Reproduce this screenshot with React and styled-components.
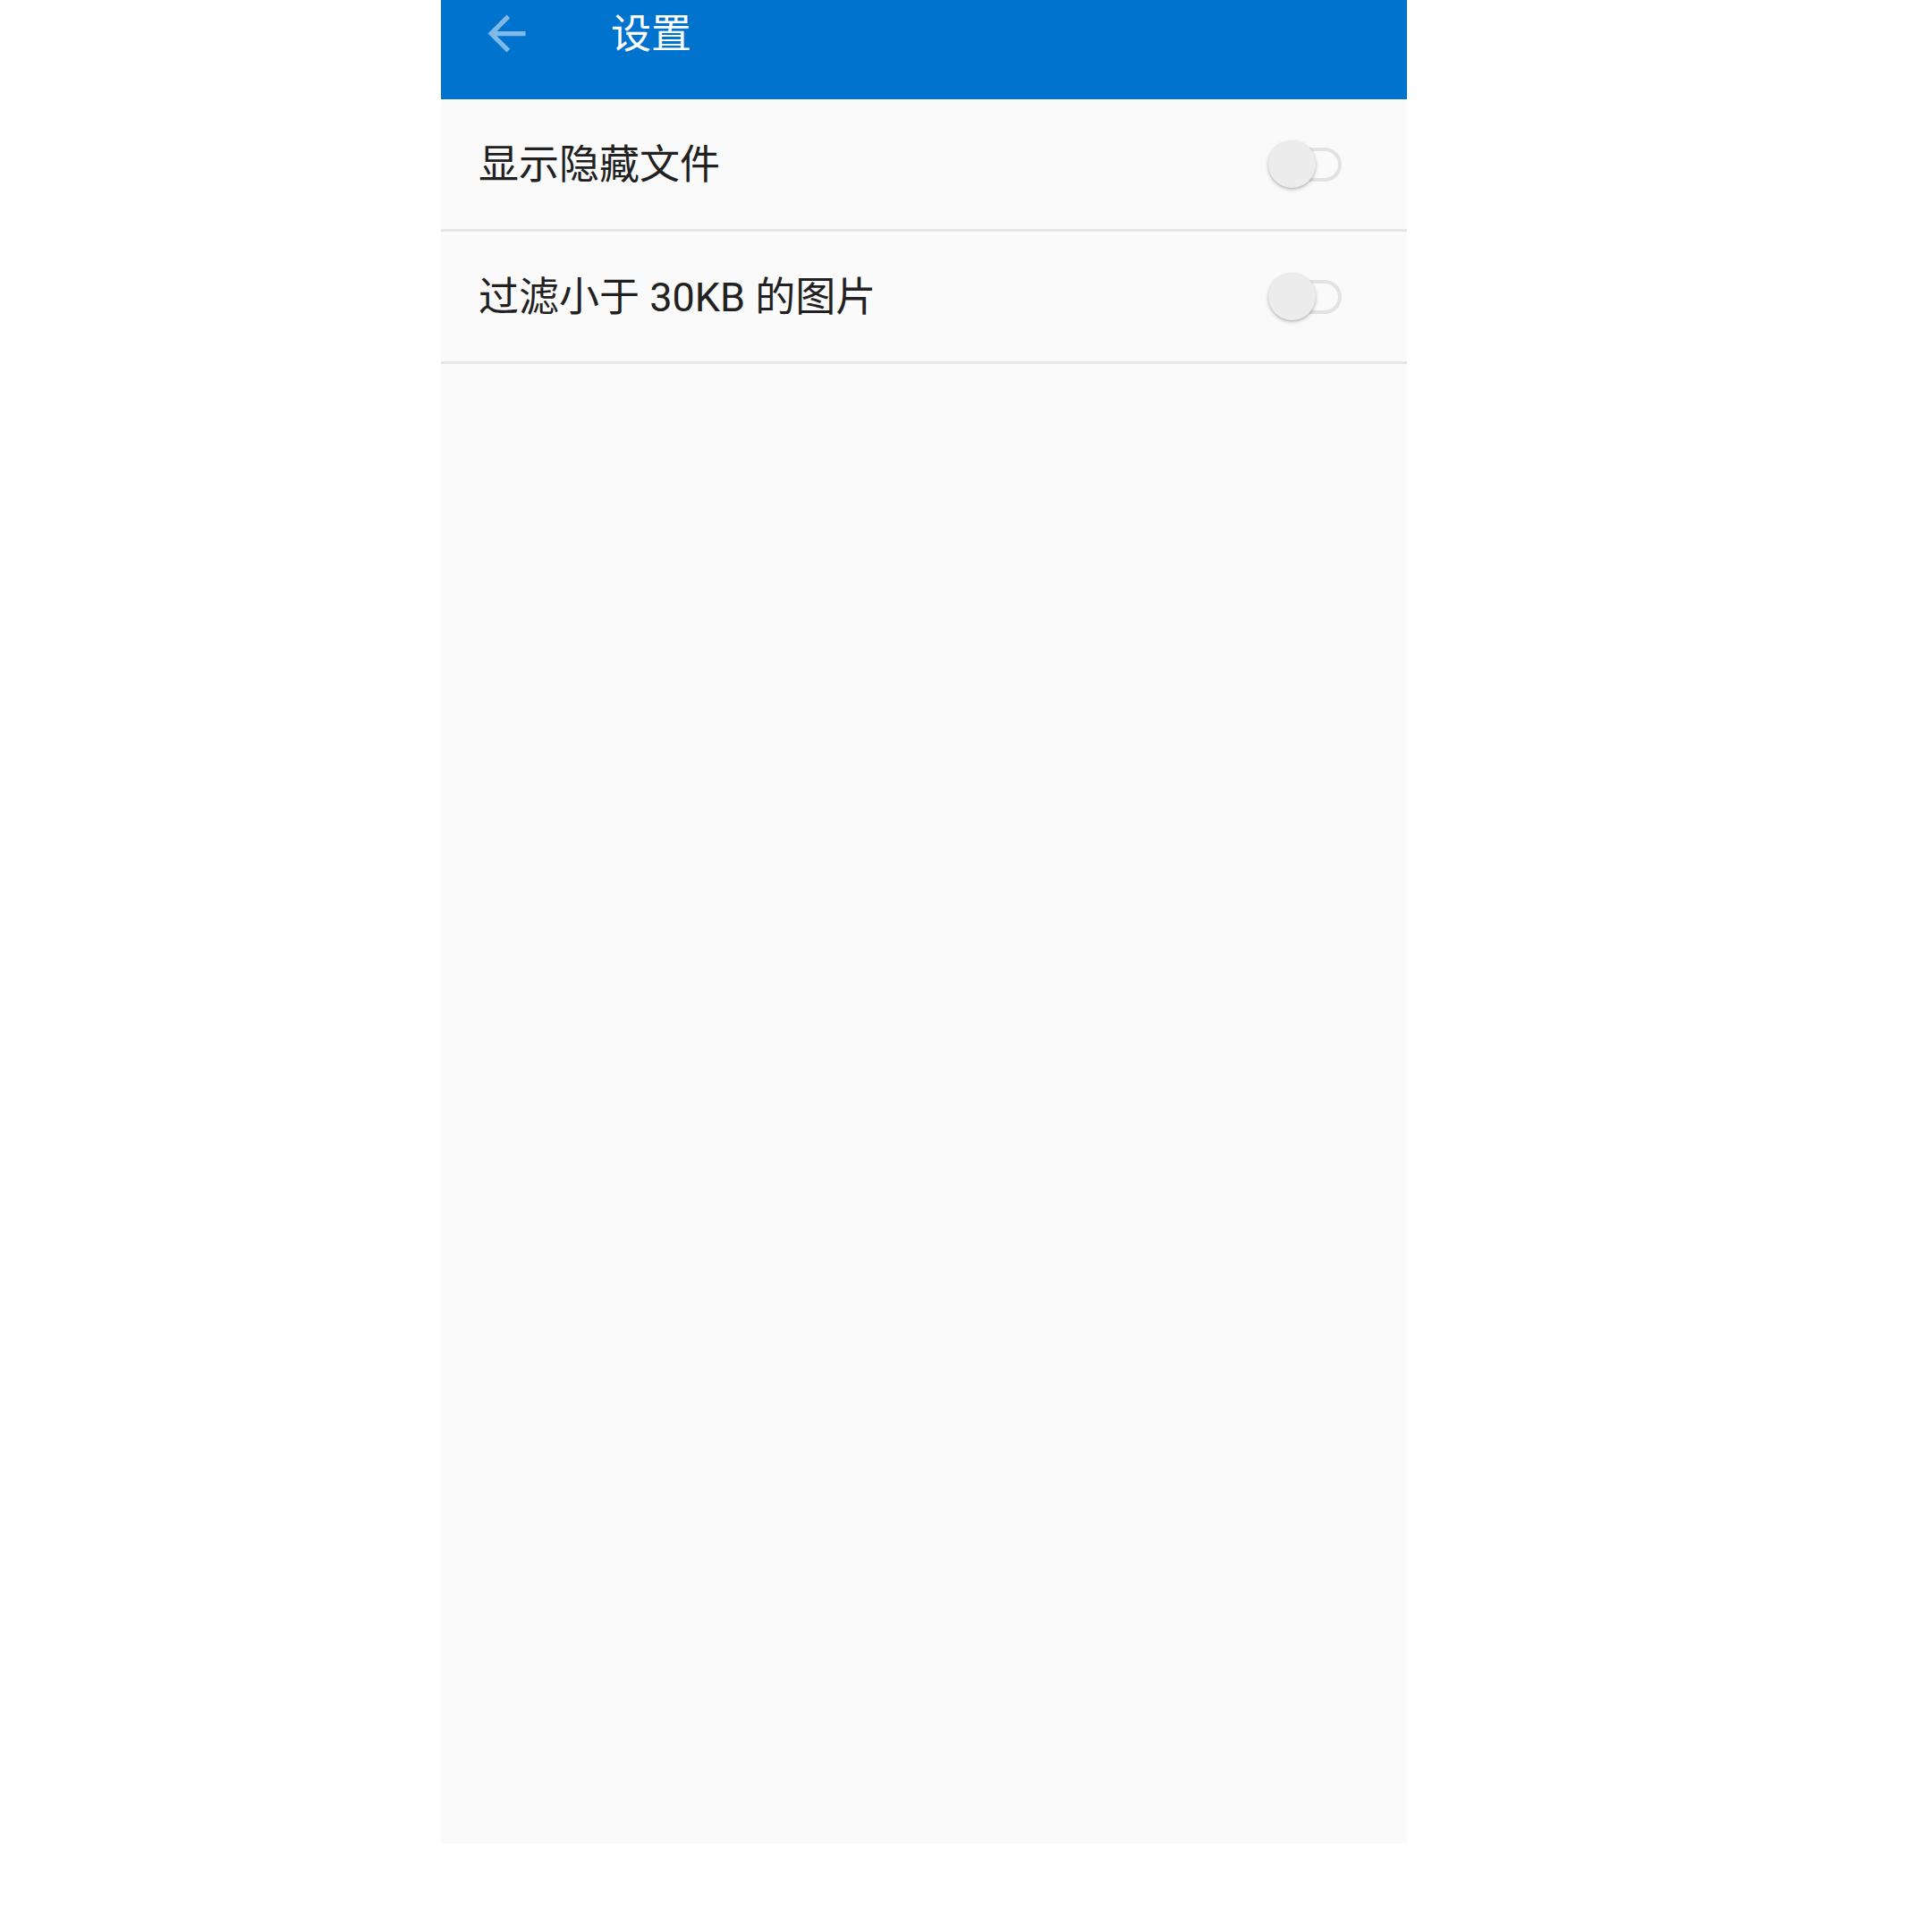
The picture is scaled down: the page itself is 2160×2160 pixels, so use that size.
import React from 'react';
import styled, { createGlobalStyle } from 'styled-components';

const Global = createGlobalStyle`
  html, body { margin: 0; padding: 0; background: #ffffff; }
  body { font-family: Roboto, "Noto Sans CJK SC", sans-serif; }
`;

const Page = styled.div`
  padding-left: 493px;
`;

const Screen = styled.div`
  width: 1080px;
  height: 2061px;
  background: #fafafa;
  display: flex;
  flex-direction: column;
`;

const Toolbar = styled.header`
  height: 111px;
  box-sizing: border-box;
  background: #0073cf;
  display: flex;
  align-items: flex-start;
  padding: 6px 0 0 42px;
`;

const BackButton = styled.button`
  width: 63px;
  height: 63px;
  padding: 0;
  border: 0;
  background: transparent;
  display: flex;
  align-items: center;
  justify-content: center;
  color: rgba(255, 255, 255, 0.5);
  svg { width: 63px; height: 63px; display: block; }
`;

const Title = styled.h1`
  margin: 1px 0 0 85px;
  font-family: Roboto, "Noto Sans CJK SC", sans-serif;
  font-weight: 400;
  font-size: 45px;
  line-height: 63px;
  color: #ffffff;
`;

const Row = styled.div`
  height: 148px;
  box-sizing: border-box;
  border-bottom: 3px solid #e6e6e6;
  display: flex;
  align-items: center;
  justify-content: space-between;
  padding: 0 73px 0 42px;
`;

const Label = styled.span`
  font-size: 45px;
  line-height: 52px;
  color: #212121;
  padding-top: 3px;
`;

const Switch = styled.div`
  position: relative;
  width: 82px;
  height: 53px;
  display: flex;
  align-items: center;
  justify-content: flex-end;
`;

const Track = styled.div`
  width: 70px;
  height: 38px;
  box-sizing: border-box;
  border: 4px solid #e2e2e2;
  border-radius: 19px;
  background: #fafafa;
`;

const Thumb = styled.div`
  position: absolute;
  left: 0;
  top: 0;
  width: 53px;
  height: 53px;
  border-radius: 50%;
  background: #ececec;
  box-shadow: 0 2px 4px rgba(0, 0, 0, 0.22), 0 1px 2px rgba(0, 0, 0, 0.1);
`;

const items = ['显示隐藏文件', '过滤小于 30KB 的图片'];

export default function App() {
  return (
    <>
      <Global />
      <Page>
        <Screen>
          <Toolbar>
            <BackButton aria-label="back">
              <svg viewBox="0 0 24 24" fill="currentColor">
                <path d="M20 11H7.83l5.59-5.59L12 4l-8 8 8 8 1.41-1.41L7.83 13H20v-2z" />
              </svg>
            </BackButton>
            <Title>设置</Title>
          </Toolbar>
          {items.map((t) => (
            <Row key={t}>
              <Label>{t}</Label>
              <Switch>
                <Track />
                <Thumb />
              </Switch>
            </Row>
          ))}
        </Screen>
      </Page>
    </>
  );
}
